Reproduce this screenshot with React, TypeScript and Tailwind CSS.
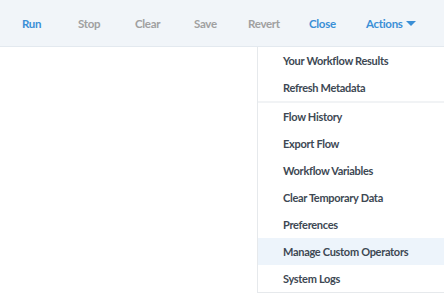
const toolbar = [
  { label: "Run", active: true, w: "w-[56px]" },
  { label: "Stop", active: false, w: "w-[57px]" },
  { label: "Clear", active: false, w: "w-[59px]" },
  { label: "Save", active: false, w: "w-[54px]" },
  { label: "Revert", active: false, w: "w-[61px]" },
  { label: "Close", active: true, w: "w-[57px]" },
];

const groups = [
  ["Your Workflow Results", "Refresh Metadata"],
  [
    "Flow History",
    "Export Flow",
    "Workflow Variables",
    "Clear Temporary Data",
    "Preferences",
    "Manage Custom Operators",
    "System Logs",
  ],
];

export default function App() {
  return (
    <div
      className="relative h-[300px] w-[444px] overflow-hidden bg-white tracking-[-0.3px]"
      style={{ fontFamily: "Lato, 'Open Sans', sans-serif" }}
    >
      <div className="flex h-[47px] items-center border-b border-[#e3e9ef] bg-[#f1f5f9] pl-[22px] pt-[1px] text-[11.5px] font-bold">
        {toolbar.map((t) => (
          <span
            key={t.label}
            className={`${t.w} shrink-0 ${t.active ? "text-[#3b8fd6]" : "text-[#a0a0a0]"}`}
          >
            {t.label}
          </span>
        ))}
        <span className="flex items-center gap-[3px] text-[#3b8fd6]">
          Actions
          <svg width="10" height="5" viewBox="0 0 10 5">
            <path d="M0 0h10L5 5z" fill="#3b8fd6" />
          </svg>
        </span>
      </div>

      <div className="absolute left-[257px] top-[47px] w-[200px] border-b border-l border-[#e6e9ec] bg-white text-[11px] font-bold text-[#3d4853]">
        {groups.map((g, gi) => (
          <div key={gi} className={gi > 0 ? "border-t-2 border-[#f1f3f5]" : ""}>
            {g.map((item) => (
              <div
                key={item}
                className={`flex h-[27px] items-center pl-[25px] pt-[2px] ${
                  item === "Manage Custom Operators" ? "bg-[#edf4fb]" : ""
                }`}
              >
                {item}
              </div>
            ))}
          </div>
        ))}
      </div>
    </div>
  );
}
